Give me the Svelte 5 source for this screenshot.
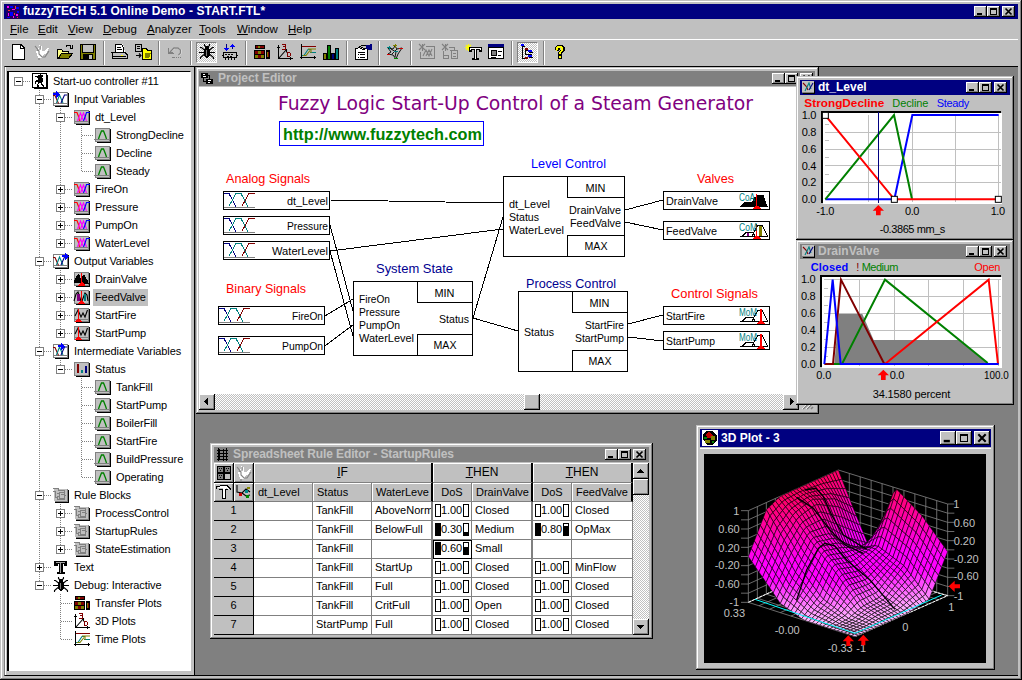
<script>
  const P = (c, d, w = 1) => `<path d="${d}" stroke="${c}" stroke-width="${w}" fill="none"/>`;
  const S = (c, d, w = 1.1) => `<path d="${d}" stroke="${c}" stroke-width="${w}" fill="none" shape-rendering="geometricPrecision"/>`;
  const F = (c, d) => `<path d="${d}" fill="${c}"/>`;
  const tile = (bg) => F('#000', 'M2 2h14v14h-14z') + F('#808080', 'M0 1h15v14h-15z') + F(bg, 'M1 2h13v12h-13z');
  const bug =
    S('#000', 'M5.500 0v1.500l1.500 1.500M10.500 0v1.500l-1.500 1.500M1 3.500h1.500l3 2.500M15 3.500h-1.500l-3 2.500M0 8.500h5M11 8.500h5M1.500 15v-1.500l3.500-3M14.500 15v-1.500l-3.500-3') +
    F('#000', 'M6 2h4v2h-4zM6 4h4v1h1v7h-1v1h-1v1h-2v-1h-1v-1h-1v-7h1z') + F('#808080', 'M7 6h1v6h-1z');
  const transfer =
    F('#000', 'M1 1h10v4h-10zM0 6h11v9h-11zM12 6h4v9h-4z') + F('#800000', 'M2 2h2v2h-2zM6 2h4v2h-4zM1 7h3v3h-3zM7 7h3v3h-3zM4 11h3v3h-3z') +
    F('#808000', 'M4 2h2v2h-2zM4 7h3v3h-3zM1 11h3v3h-3zM7 11h3v3h-3zM13 8h1v5h-1z') + F('#800000', 'M14 8h1v5h-1z');
  const plot3 =
    P('#000', 'M1.500 1v14M0 3.500h3M1 14.500h15M13.500 13v3') + S('#000', 'M2 14L9.500 5.500M6.500 5.500h3v3') +
    P('#800000', 'M5 .5h3.500v5H5M6 2.500h2M10.500 8v5M10 8.500h3M13.500 9v3M10 12.500h3');
  const time =
    P('#000', 'M1.500 0v15M0 13.500h16M14.500 12v3') + P('#800000', 'M2 2.500h14') + S('#008080', 'M2 11.500h2l4-6h3M10 8.500h6') +
    S('#808000', 'M8 5h8M3 11.500h3l4-5M11 5v4');
  const curves = S('#f00', 'M0 3.500h3l1.500 4l1 4.500') + S('#f0f', 'M3.500 12l1.500-4l1.500-4l1.500 4l1.500 4M6.500 12l1.500-4l1.500-4l1.500 4l1.500 4') + S('#00f', 'M9.500 12l1.500-4l1.500-4.500h3.500');
  const smallCurves = S('#800000', 'M0 4.500h2l3.500 8') + S('#008080', 'M3.500 12l3-8l3.500 8') + S('#000080', 'M8 12l3.500-8h2.500');
  const block = P('#808080', 'M0 1.500h5v2h6v4h-3M2 4.500h-2M2 4v6h2M6.500 5h5v6h-5zM4 6.500h3M4 9.500h3M11 8.500h2M4.500 10v2h7');
  const hand = F('#fff', 'M5 1h1v4h1v-3h1v5h3l2-3h2l-3 6h-2l-2 4h-4l-2-7h2z') + S('#808080', 'M1 2l4 5v3l3 3h3l4-6M3 6l2 1M6 2v4M5 14v2');
  const spark = S('#ff0', 'M3.500 0v7M0 3.500h7M1 1l5 5M6 1l-5 5');
  const I = {
    root: F('#000', 'M2 2h14v14h-14z') + F('#000', 'M0 0h15v15h-15z') + F('#fff', 'M1 1h13v13h-13z') +
      F('#000', 'M8 1h1v1h2v2h-1v1h1v4h-1v2h1v1h1v2h-1v-1h-1v-1h-1v-2h-2v1h-1v1h1v2h-2v-3h1v-2h-2v2h-1v-3h1v-1h2v-2h-1v-1h-2v-1h3v-1h1z'),
    input: tile('#fff') + P('#808080', 'M0 12.500h15') + smallCurves + F('#00f', 'M0 2h3v-2l4 3l-4 4v-3h-3z'),
    output: tile('#fff') + P('#808080', 'M0 12.500h15') + smallCurves + F('#00f', 'M9 2h3v-2l4 3l-4 4v-3h-3z'),
    inter: tile('#fff') + P('#808080', 'M0 12.500h15') + smallCurves + F('#00f', 'M5 2h3v-2l4 3l-4 4v-3h-3z'),
    var: tile('#c0c0c0') + P('#808080', 'M0 12.500h15') + curves,
    term: tile('#c0c0c0') + P('#808080', 'M-1 12.500h16') + S('#008000', 'M3.500 12l1-3l2-5h2l2 5l1 3', 1.3),
    drain: tile('#c0c0c0') + F('#000', 'M0 12l1-5h1l1-3l2-1l2 5l2-4h2l1 4h1l2 5z') + P('#f00', 'M7.500 2v12', 1) + F('#f00', 'M4 14h1l2-3h1l3 3v1h-7z'),
    feed: tile('#c0c0c0') + S('#000', 'M0 12l2-7l2-2l3 9M8 12l3-8l2 2l1 6') + F('#800080', 'M3 5h3v7h-3z') + F('#008080', 'M10 5h2v7h-2z') + P('#f00', 'M7.500 2v12') + F('#f00', 'M4 15l3-4h1l3 4z'),
    start: tile('#c0c0c0') + P('#808080', 'M0 12.500h14') + S('#000', 'M1 9l3-6l3 7l2-4l2 4l2.500-7') + P('#f00', 'M4.500 2v11') + F('#f00', 'M1 15l3-4h1l3 4z'),
    bars: tile('#c0c0c0') + F('#800000', 'M3 3h2v9h-2z') + F('#008080', 'M7 9h2v3h-2z') + F('#000080', 'M11 5h2v7h-2z'),
    rule: F('#000', 'M2 3h14v13h-14z') + F('#c0c0c0', 'M1 2h13v12h-13z') + P('#808080', 'M14.500 2v12.500h-13') + block,
    text: F('#000', 'M1 2h13v5h-3v-2h-1v8h2v2h-8v-2h2v-8h-1v2h-4z') + F('#a0a0a0', 'M3 3h9v1h-4v10h-1v-10h-4z'),
    bug, transfer, plot3, time,
    neu: F('#fff', 'M1 0h9l4 4v12h-13z') + P('#000', 'M1.500 .5h8.500l3.500 3.500v11.500h-12zM9.500 0v4.500h4'),
    hand,
    open: F('#ff8', 'M0 5h5l1 2h6v3h-7l-3 5h-2z') + F('#808000', 'M4 9h12l-4 6h-12z') + P('#000', 'M.5 15v-10h4l1 2h6v2M.5 14.500h11l4-5h-11l-3 5M9 2.500l1-1h3l1 2M15.500 1v3h-3'),
    save: F('#000', 'M0 0h16v16h-16z') + F('#808000', 'M1 1h14v14h-14z') + F('#c0c0c0', 'M3 1h10v7h-10zM9 11h3v4h-3z') + P('#000', 'M2.500 1v7h11v-7M3.500 15v-4.500h9v4.500') + F('#000', 'M4 11h5v4h-5z'),
    print: F('#fff', 'M4 0h7l2 8h-10z') + P('#000', 'M3.500 8v-7.500h6l2 3v5M5 3.500h4M5 5.500h5M0 8.500h3l10 0l2 2v4h-14zM1 12.500h13') + F('#ff0', 'M9 11h2v1h-2z'),
    pages: P('#000', 'M.5 .5h6v7h-6zM2 2.500h3M2 4.500h3M1 11.500h5') + S('#000', 'M4 9.500l2 2l-2 2') + F('#ff0', 'M8 5h4l1 2h3v8h-8z') + P('#000', 'M7.500 15v-10.500h4l1 2h3.500v8.500z') + F('#808000', 'M10 9h6l-2 5h-4z'),
    undo: S('#fff', 'M4 7l4-3h3l3 2v3l-2 2') + F('#808080', 'M1 4h1v4h4v1h1v1h-6z') + S('#808080', 'M3 8l4-4h4l2.500 2v3l-2 2', 1.3) + P('#808080', 'M5 13.500h3M9 13.500h1M11 13.500h1M13 13.500h1'),
    chip: P('#000080', 'M4.500 0v5M10.500 5v-5') + F('#00f', 'M2 4h5l-2.500 3zM8 3h5l-2.500-3z') + F('#000', 'M1 8h14v6h-14z') + F('#c0c0c0', 'M2 9h12v4h-12z') + P('#000', 'M3 10.500h2M6 10.500h2M9 10.500h2M5 12.500h2M8 12.500h2M0 11.500h2M14 11.500h2M3.500 14v2M6.500 14v2M9.500 14v2M12.500 14v2'),
    chart: F('#000', 'M0 9h4v7h-4zM4 1h4v15h-4zM8 9h4v7h-4zM12 4h4v12h-4z') + F('#808000', 'M1 10h2v5h-2z') + F('#008000', 'M5 2h2v13h-2z') + F('#000080', 'M9 10h2v5h-2z') + F('#008080', 'M13 5h2v10h-2z'),
    props: F('#fff', 'M1 4h11v12h-11z') + P('#000', 'M.5 15.500v-11h2l4-3h4l2 3v11zM3 8.500h7M3 10.500h1M5 10.500h5M3 13.500h1M5 13.500h5M5 5l3-2M7 6l3-2M9 6l2-2') + F('#000080', 'M11 1h4v-1h2v6h-2l-4-1z'),
    net: S('#000', 'M1 4l5 1l2-3l2 3l5-1l-4 6l-2 5l-3-4l-5-1l3-2zM4 5l5 3l-1 5M10 5l-5 5', 0.9) + P('#008080', 'M0 3.500h4M2.500 2v4M7 7.500h4') + P('#808000', 'M6 1.500h4M8.500 0v4') + P('#c00', 'M12 4.500h4M0 10.500h3') + P('#080', 'M7 14.500h4'),
    dis1: S('#808080', 'M0 0l6 6M6 0l-6 6M3.500 0v7') + P('#808080', 'M7 2.500h8.500v12h-14v-7') + S('#808080', 'M4 12l3-6l3 6l3-7M7 12l3-6l3 6'),
    dis2: S('#808080', 'M0 0l6 6M6 0l-6 6M3.500 0v7') + P('#808080', 'M7 3.500h5v3M1.500 7v7.500h5v-3h-5M8 6.500h7.500v8h-6v-8M11 9.500h3M11 12.500h3'),
    newtext: spark + F('#000', 'M4 3h13v5h-3v-2h-2v8h2v2h-7v-2h2v-8h-2v2h-3z') + F('#fff', 'M5 4h11v2h-1v-1h-4v10h-1v-10h-4v1h-1z'),
    form: F('#000', 'M0 1h16v14h-16z') + F('#000080', 'M0 0h16v3h-16z') + F('#fff', 'M1 4h14v10h-14z') + P('#000', 'M3.500 6.500h5v5h-5zM10 7.500h4M10 11.500h3M3 13.500h5') + F('#808080', 'M4 7h4v4h-4z'),
    tree: P('#000', 'M2.500 2v12h4M2 2.500h3M5.500 5v6M6 6.500h3') + F('#00f', 'M1 0h3v2h-3zM8 6h4v2h-4zM8 11h4v2h-4z') + F('#800000', 'M5 4h3v2h-3zM5 13h3v2h-3z') + P('#000', 'M9 8.500h4M6 10.500h6M9 13.500h4'),
    help: F('#000', 'M5 1h6v1h1v1h1v4h-1v1h-1v1h-1v2h-4v-3h1v-1h1v-1h1v-2h-1v2h-1v1h-3v-1h-1v-3h1v-1h1zM6 11h4v4h-4z') + F('#ff0', 'M5 2h5v1h1v4h-1v1h-1v1h-2v-1h1v-1h1v-3h-3v2h-1v1h-1v-4h1zM7 12h2v2h-2zM7 9h2v1h-2z'),
    app: F('#200060', 'M0 0h14v14h-14z') + F('#f0f', 'M1 1h2v2h-2zM6 4h3v1h-3zM2 8h1v3h-1zM10 9h2v2h-2zM7 11h1v2h-1z') + F('#00f', 'M4 1h3v2h-3zM10 2h3v2h-3zM4 7h3v4h-3zM11 6h2v2h-2zM1 12h3v1h-3z') + F('#f33', 'M9 1h1v3h-1zM2 5h2v1h-2zM8 8h1v2h-1zM11 12h1v1h-1z'),
    proj: F('#000', 'M0 1h7v5h-7zM5 7h7v5h-7z') + F('#fff', 'M2 2h2v1h-2zM2 4h3v1h-3zM7 8h3v1h-3zM7 10h2v1h-2z') + P('#000', 'M2.500 5v4.500h3M7 3.500h1.500v4'),
    fx: F('#000', 'M1 1h12v12h-12z') + F('#c0c0c0', 'M0 0h12v12h-12z') + P('#808080', 'M0 11.500h12') + S('#800000', 'M1 2l3 3l2 4') + S('#008080', 'M3 10l4-8l2 6') + S('#000080', 'M7 9l4-7'),
    sheet: P('#000', 'M1 2.500h11M1 5.500h11M1 8.500h11M1 11.500h11M2.500 0v13M7.500 1v12M10.500 0v13') + F('#000', 'M2 1h2v11h-2z'),
    plotwin: F('#fff', 'M0 0h16v16h-16z') + F('#000', 'M1 4l4-3h6l4 5v4l-4 5h-6l-4-6z') + F('#c00000', 'M4 4l3-2l4 3l-1 3h-5z') + F('#808000', 'M9 6h4v4h-4zM3 10h5v3h-5z') + F('#008000', 'M2 7h3v2h-3zM10 11h2v2h-2z'),
    checker: F('#000', 'M1 1h14v14h-14z') + F('#808080', 'M2 2h5v5h-5zM9 2h5v5h-5zM2 9h5v5h-5z') + F('#000', 'M3 3h1v1h-1zM5 3h1v1h-1zM4 5h1v1h-1zM10 3h1v1h-1zM12 3h1v1h-1zM11 5h1v1h-1zM3 10h1v1h-1zM5 10h1v1h-1zM4 12h1v1h-1z') + F('#c0c0c0', 'M9 9h5v5h-5z'),
    hammer: F('#fff', 'M1 2h10l4 3v1l-5-2v10h-3v-10h-5z') + P('#000', 'M0 4.500v-2h3l2-1h6l4 4M3 5h3.500v9h3v-9l2 0'),
    nodes: S('#000', 'M1 1v7l5 1l4-4l4 3M6 9l4 3l4-1') + F('#c00', 'M3 9h3v3h-3z') + F('#080', 'M10 11h3v3h-3z') + F('#088', 'M9 6h3v3h-3z') + F('#880', 'M11 3h3v2h-3z')
  };

  const raw = [
    [0, '-', 'root', 'Start-uo controller #11'], [1, '-', 'input', 'Input Variables'], [2, '-', 'var', 'dt_Level'],
    [3, '', 'term', 'StrongDecline'], [3, '', 'term', 'Decline'], [3, '', 'term', 'Steady'],
    [2, '+', 'var', 'FireOn'], [2, '+', 'var', 'Pressure'], [2, '+', 'var', 'PumpOn'], [2, '+', 'var', 'WaterLevel'],
    [1, '-', 'output', 'Output Variables'], [2, '+', 'drain', 'DrainValve'], [2, '+', 'feed', 'FeedValve'], [2, '+', 'start', 'StartFire'], [2, '+', 'start', 'StartPump'],
    [1, '-', 'inter', 'Intermediate Variables'], [2, '-', 'bars', 'Status'],
    [3, '', 'term', 'TankFill'], [3, '', 'term', 'StartPump'], [3, '', 'term', 'BoilerFill'], [3, '', 'term', 'StartFire'], [3, '', 'term', 'BuildPressure'], [3, '', 'term', 'Operating'],
    [1, '-', 'rule', 'Rule Blocks'], [2, '+', 'rule', 'ProcessControl'], [2, '+', 'rule', 'StartupRules'], [2, '+', 'rule', 'StateEstimation'],
    [1, '+', 'text', 'Text'], [1, '-', 'bug', 'Debug: Interactive'],
    [2, '', 'transfer', 'Transfer Plots'], [2, '', 'plot3', '3D Plots'], [2, '', 'time', 'Time Plots']
  ];
  const goesOn = (i, l) => {
    for (let j = i + 1; j < raw.length; j++) {
      if (raw[j][0] < l) return false;
      if (raw[j][0] === l) return true;
    }
    return false;
  };
  const tree = raw.map(([level, box, icon, label], i) => ({
    level, box, icon, label,
    lines: [1, 2, 3].filter((l) => l <= level && (l === level || goesOn(i, l))).map((l) => ({ x: 9.5 + 21 * l, end: goesOn(i, l) ? 18 : 9 }))
  }));

  const menu = ['File', 'Edit', 'View', 'Debug', 'Analyzer', 'Tools', 'Window', 'Help'];
  const tools = ['neu', 'hand', 'open', 'save', '|', 'print', 'pages', '|', 'undo', '|', 'bug', 'chip', '|', 'transfer', 'plot3', 'time', 'chart', '|', 'props', '|', 'net', '|', 'dis1', 'dis2', 'newtext', 'form', '|', 'tree', '|', 'help'];
  const pressed = ['bug', 'tree'];

  const inputs = [[223, 191, 'dt_Level', 41], [223, 216, 'Pressure', 41], [223, 241, 'WaterLevel', 56], [218, 306, 'FireOn', 31], [218, 336, 'PumpOn', 41]];
  const outputs = [[663, 191, 'DrainValve', 52, 'CoA'], [663, 221, 'FeedValve', 51, 'CoM'], [663, 306, 'StartFire', 39, 'MoM'], [663, 331, 'StartPump', 49, 'MoM']];
  const blocks = [
    { x: 503, y: 176, w: 121, h: 80, ix: 567, ins: [['dt_Level', 208, 41], ['Status', 221, 30], ['WaterLevel', 234, 55]], outs: [['DrainValve', 214, 52], ['FeedValve', 227, 51]] },
    { x: 353, y: 281, w: 119, h: 74, ix: 417, ins: [['FireOn', 303, 31], ['Pressure', 316, 41], ['PumpOn', 329, 41], ['WaterLevel', 342, 55]], outs: [['Status', 323, 30]] },
    { x: 518, y: 291, w: 109, h: 80, ix: 572, ins: [['Status', 336, 30]], outs: [['StartFire', 329, 39], ['StartPump', 342, 49]] }
  ];
  const wires = [[330, 200, 503, 203], [330, 225, 353, 311], [330, 251, 503, 229], [330, 251, 353, 336], [325, 316, 353, 299], [325, 346, 353, 325], [473, 318, 503, 217], [473, 318, 518, 331], [625, 210, 663, 200], [625, 222, 663, 230], [628, 324, 663, 315], [628, 337, 663, 341]];
  const heads = [
    ['Analog Signals', 226, 183, 84, '#f00'], ['Binary Signals', 226, 293, 80, '#f00'], ['System State', 376, 273, 77, '#000090'], ['Level Control', 531, 168, 75, '#00f'],
    ['Process Control', 526, 288, 90, '#000090'], ['Valves', 697, 183, 37, '#f00'], ['Control Signals', 671, 298, 87, '#f00']
  ];

  const rules = [
    ['TankFill', 'AboveNorm', 1, 'Closed', 1, 'Closed'], ['TankFill', 'BelowFull', 0.3, 'Medium', 0.8, 'OpMax'], ['TankFill', '', 0.6, 'Small', null, ''],
    ['TankFill', 'StartUp', 1, 'Closed', 1, 'MinFlow'], ['TankFill', 'Full', 1, 'Closed', 1, 'Closed'], ['TankFill', 'CritFull', 1, 'Open', 1, 'Closed'], ['StartPump', 'Full', 1, 'Closed', 1, 'Closed']
  ];

  const ka = [0, 0.2, 0.35, 0.55, 0.8, 1];
  const kb = [0, 0.15, 0.3, 0.52, 0.77, 1];
  const H = [
    [0.5, 0.3, 0.1, 0, 0, 0], [0.92, 0.68, 0.42, 0.15, 0.02, 0], [1, 0.85, 0.66, 0.42, 0.08, 0],
    [1, 0.92, 0.62, 0.36, 0.1, 0], [1, 0.8, 0.34, 0.46, 0.33, 0.05], [1, 0.6, 0.22, 1, 0.78, 0.48]
  ];
  const seg = (k, v) => {
    let i = 0;
    while (i < k.length - 2 && v > k[i + 1]) i++;
    return [i, (v - k[i]) / (k[i + 1] - k[i])];
  };
  const height = (a, b) => {
    const [i, s] = seg(ka, a);
    const [j, t] = seg(kb, b);
    return (H[i][j] * (1 - t) + H[i][j + 1] * t) * (1 - s) + (H[i + 1][j] * (1 - t) + H[i + 1][j + 1] * t) * s;
  };
  const project = (a, b, z) => [
    175 * (1 - a) * (1 - b) + 445 * a * (1 - b) + 495 * (1 - a) * b + 773 * a * b,
    547 * (1 - a) * (1 - b) + 425 * a * (1 - b) + 650 * (1 - a) * b + 527 * a * b - 275 * z
  ];
  const shade = (z) => {
    if (z > 0.45) return `rgb(255,0,${Math.round(255 - (z - 0.45) * 290)})`;
    const g = z > 0.3 ? 0 : Math.round((0.3 - z) * 640);
    return `rgb(255,${g},255)`;
  };
  const N = 30;
  const cells = [];
  for (let i = 0; i < N; i++)
    for (let j = 0; j < N; j++) {
      const q = [[i, j], [i + 1, j], [i + 1, j + 1], [i, j + 1]].map(([m, n]) => {
        const z = height(m / N, n / N);
        return { z, p: project(m / N, n / N, z) };
      });
      cells.push({ d: i - j, pts: q.map((v) => v.p.map((n) => n.toFixed(1)).join(',')).join(' '), c: shade(q.reduce((s, v) => s + v.z, 0) / 4) });
    }
  cells.sort((m, n) => n.d - m.d);
  const L = (a, b, z, a2, b2, z2) => `M${project(a, b, z)}L${project(a2, b2, z2)}`;
  let walls = '';
  for (let i = 0; i <= 10; i++) {
    const k = i / 10;
    walls += L(0, 0, k, 1, 0, k) + L(1, 0, k, 1, 1, k) + L(k, 0, 0, k, 0, 1) + L(1, k, 0, 1, k, 1) + L(k, 0, 0, k, 1, 0) + L(0, k, 0, 1, k, 0);
    walls += `M153 ${272 + 27.5 * i}h22M773 ${252 + 27.5 * i}h20`;
  }
  const plotText = [
    ['1', 130, 284], ['0.60', 85, 338], ['0.20', 85, 395], ['-0.20', 74, 446], ['-0.60', 74, 503], ['-1', 118, 558], ['0.33', 101, 590], ['-0.00', 254, 641], ['-0.33', 413, 696], ['-1', 499, 696],
    ['0', 637, 632], ['1', 775, 572], ['-1', 791, 540], ['-0.60', 791, 481], ['-0.20', 791, 430], ['0.20', 791, 374], ['0.60', 791, 320], ['1', 790, 263]
  ];
  const ticks = ['1.0', '0.8', '0.6', '0.4', '0.2', '0.0'];
</script>

{#snippet icon(name, size = 16)}
  <svg class="ico" width={size} height={size} viewBox="0 0 {size} {size}" shape-rendering="crispEdges">{@html I[name]}</svg>
{/snippet}

{#snippet txt(x, y, s, len, fill = '#000', size = 11)}
  <text {x} {y} {fill} font-size={size} textLength={len} lengthAdjust="spacingAndGlyphs">{s}</text>
{/snippet}

{#snippet buttons()}
  <span class="btns">
    <i class="wb"><svg viewBox="0 0 13 11"><path d="M3 8h5" stroke="#000" stroke-width="2" /></svg></i>
    <i class="wb"><svg viewBox="0 0 13 11" shape-rendering="crispEdges"><path d="M3 2h7v7h-7zM4 4v4h5v-4z" fill-rule="evenodd" /></svg></i>
    <i class="wb last"><svg viewBox="0 0 13 11"><path d="M3.500 2.500l6 6M9.500 2.500l-6 6" stroke="#000" stroke-width="1.700" /></svg></i>
  </span>
{/snippet}

{#snippet arrow(d)}
  <span class="raised sb"><svg width="13" height="13" viewBox="0 0 13 13" shape-rendering="crispEdges"><path {d} /></svg></span>
{/snippet}

{#snippet dos(v)}
  {#if v !== null}
    <span class="dos">
      <i class="bar" class:full={v < 1}></i><span>{v.toFixed(2)}</span><i class="bar"><b style="height:{v < 1 ? v * 100 : 0}%"></b></i>
    </span>
  {/if}
{/snippet}

<div class="app">
  <div class="title main">{@render icon('app', 14)}<span class="cap">fuzzyTECH 5.1 Online Demo - START.FTL*</span>{@render buttons()}</div>
  <nav>{#each menu as m}<span><u>{m[0]}</u>{m.slice(1)}</span>{/each}</nav>
  <div class="tools">
    {#each tools as t}
      {#if t === '|'}<span class="sep"></span>{:else}<span class="tool" class:pressed={pressed.includes(t)}>{@render icon(t, 17)}</span>{/if}
    {/each}
  </div>
  <div class="work">
    <div class="side">
      <div class="tree">
        {#each tree as r}
          <div class="row">
            <svg width={23 + 21 * r.level} height="18" shape-rendering="crispEdges">
              {#each r.lines as l}<path d="M{l.x} 0V{l.end}" class="dots" />{/each}
              <path d="M{9.5 + 21 * r.level} 9.500h12" class="dots" />
              {#if r.box}
                <rect x={5.5 + 21 * r.level} y="5.5" width="8" height="8" fill="#fff" stroke="#808080" />
                <path d="M{7 + 21 * r.level} 9.500h5{r.box === '+' ? 'm-2.500 -2.500v5' : ''}" stroke="#000" fill="none" />
              {/if}
            </svg>
            {@render icon(r.icon)}
            <span class="label" class:sel={r.label === 'FeedValve'}>{r.label}</span>
          </div>
        {/each}
      </div>
    </div>

    <div class="mdi">
      <section class="win project">
        <div class="title off">{@render icon('proj', 14)}<span class="cap">Project Editor</span>{@render buttons()}</div>
        <svg class="canvas" width="615" height="307" viewBox="199 87 615 307">
          <g font-family="DejaVu Sans Condensed, DejaVu Sans, sans-serif">{@render txt(278, 110, 'Fuzzy Logic Start-Up Control of a Steam Generator', 475, '#800080', 20)}</g>
          <rect x="279.5" y="121.5" width="204" height="24" fill="none" stroke="#00f" />
          <g font-weight="bold">{@render txt(283, 140, 'http://www.fuzzytech.com', 199, '#008000', 16)}</g>
          {#each heads as [s, x, y, w, c]}{@render txt(x, y, s, w, c, 13)}{/each}
          {#each wires as [x1, y1, x2, y2]}<line {x1} {y1} {x2} {y2} stroke="#000" shape-rendering="crispEdges" />{/each}
          {#each inputs as [x, y, s, w]}
            <g fill="none" shape-rendering="crispEdges">
              <rect x={x + 0.5} y={y + 0.5} width="106" height="18" fill="#fff" stroke="#000" />
              <path d="M{x + 1} {y + 16.500}h31" stroke="#808080" />
              <path d="M{x + 1} {y + 2.500}h5l7 13" stroke="#000080" />
              <path d="M{x + 6} {y + 15}l7 -12.500h5l7 13" stroke="#008080" />
              <path d="M{x + 19} {y + 15}l7 -12.500h6" stroke="#800000" />
            </g>
            {@render txt(x + 105 - w, y + 14, s, w)}
          {/each}
          {#each outputs as [x, y, s, w, k]}
            <rect x={x + 0.5} y={y + 0.5} width="106" height="18" fill="#fff" stroke="#000" shape-rendering="crispEdges" />
            {@render txt(x + 3, y + 14, s, w)}
            <g transform="translate({x} {y})" fill="none" stroke="#000" shape-rendering="crispEdges">
              {#if k === 'CoA'}<path d="M78 15.500l4-4h7l3-5l3-2h5l4 11z" fill="#000" />
              {:else}<path d="M79 15.500l4-4h7l2 4M89 15l6-11h4l6 12M77 15.500h27" />{/if}
              {#if k === 'CoM'}<path d="M97 5v10" stroke="#808000" stroke-width="3" /><path d="M85 12v3" stroke="#800080" stroke-width="2" />{/if}
              <path d="M{k === 'MoM' ? 97.5 : 93.5} 3v13" stroke="#f00" stroke-width={k === 'MoM' ? 2 : 1} />
              <path d="M{k === 'MoM' ? 95 : 91} 17l2-2h2l2 2z" fill="#f00" stroke="#f00" />
            </g>
            {@render txt(x + 76, y + 10, k, k === 'CoA' ? 16 : 18, '#008080', 10.500)}
          {/each}
          {#each blocks as b}
            <g fill="#fff" stroke="#000" shape-rendering="crispEdges">
              <rect x={b.x + 0.5} y={b.y + 0.5} width={b.w} height={b.h} />
              <rect x={b.ix + 0.5} y={b.y + 0.5} width={b.x + b.w - b.ix} height="21" />
              <rect x={b.ix + 0.5} y={b.y + b.h - 20.5} width={b.x + b.w - b.ix} height="21" />
            </g>
            {@render txt((b.ix + b.x + b.w) / 2 - 10, b.y + 16, 'MIN', 20, '#000', 11.500)}
            {@render txt((b.ix + b.x + b.w) / 2 - 11, b.y + b.h - 6, 'MAX', 23, '#000', 11.500)}
            {#each b.ins as [s, y, w]}{@render txt(b.x + 6, y, s, w)}{/each}
            {#each b.outs as [s, y, w]}{@render txt(b.x + b.w - w - 3, y, s, w)}{/each}
          {/each}
        </svg>
        <div class="hscroll">
          {@render arrow('M7 2v7l-4-3.500z')}<span class="fill1"></span><span class="raised sb thumb"></span><span class="fill2"></span>{@render arrow('M5 2v7l4-3.500z')}
          <svg class="grip" width="16" height="16"><path d="M4 15l10-10M8 15l6-6M12 15l2-2" stroke="#808080" stroke-width="1.600" /><path d="M3 15l10-10M7 15l6-6" stroke="#fff" stroke-width=".8" /></svg>
        </div>
      </section>

      <section class="win level">
        <div class="title">{@render icon('fx', 13)}<span class="cap">dt_Level</span>{@render buttons()}</div>
        <svg width="210" height="140" viewBox="15 81 630 420" font-size="33">
          <g font-weight="bold"><text x="28" y="116" fill="#f00" textLength="240" lengthAdjust="spacingAndGlyphs">StrongDecline</text></g>
          <text x="292" y="116" fill="#008000" textLength="108">Decline</text>
          <text x="425" y="116" fill="#00f" textLength="98">Steady</text>
          <g shape-rendering="crispEdges" fill="none">
            <rect x="78" y="129" width="540" height="276" fill="#000" /><rect x="84" y="135" width="537" height="273" fill="#fff" />
            <path d="M91 193h526M91 244h526M91 292h526M91 343h526M91 168h12M91 217h12M91 268h12M91 319h12M91 370h12M220 142v260M351 142v260M481 142v260M610 142v260" stroke="#c0c0c0" stroke-width="3" />
          </g>
          <g fill="none" stroke-width="6">
            <path d="M91 394h207L352 141H611" stroke="#00f" />
            <path d="M91 394L297 141L351 394" stroke="#008000" />
            <path d="M91 142L298 394H611" stroke="#f00" />
            <path d="M250.500 132v272" stroke="#000080" stroke-width="3" shape-rendering="crispEdges" />
          </g>
          {#each [[91, 142], [298, 394], [610, 394]] as [x, y]}<rect x={x - 9} y={y - 9} width="18" height="18" fill="#fff" stroke="#000" stroke-width="3" />{/each}
          {#each ticks as s, i}<text x="20" y={154 + i * 50.300} textLength="44">{s}</text>{/each}
          <text x="64" y="440" textLength="54">-1.0</text><text x="330" y="440" textLength="43">0.0</text><text x="587" y="440" textLength="43">1.0</text>
          <path d="M250 411l17 17h-10v14h-14v-14h-10z" fill="#f00" />
          <text x="254" y="495" textLength="197">-0.3865 mm_s</text>
        </svg>
      </section>

      <section class="win drain">
        <div class="title off">{@render icon('fx', 13)}<span class="cap">DrainValve</span>{@render buttons()}</div>
        <svg width="210" height="142" viewBox="15 573 630 426" font-size="33">
          <g font-weight="bold"><text x="47" y="608" fill="#00f" textLength="113">Closed</text></g>
          <text x="184" y="608" fill="#800000">!</text>
          <text x="200" y="608" fill="#008000" textLength="110">Medium</text>
          <text x="538" y="608" fill="#f00" textLength="78">Open</text>
          <g shape-rendering="crispEdges" fill="none">
            <rect x="75" y="621" width="543" height="276" fill="#000" /><rect x="81" y="627" width="540" height="273" fill="#fff" />
            <path d="M88 635h530M88 685h530M88 736h530M88 787h530M88 838h530M88 660h12M88 711h12M88 762h12M88 813h12M88 864h12M193 635v260M297 635v260M400 635v260M505 635v260M610 635v260" stroke="#c0c0c0" stroke-width="3" />
          </g>
          <path d="M118 888L131 738H202L236 816H490L580 888z" fill="#808080" />
          <g fill="none" stroke-width="6">
            <path d="M114 888h27L270 635L578 885" stroke="#008000" />
            <path d="M270 888L581 635L609 888" stroke="#f00" />
            <path d="M88 888H114L138 635L268 888" stroke="#800000" />
            <path d="M88 888L113 635L137 888H611" stroke="#00f" />
          </g>
          {#each ticks as s, i}<text x="18" y={646 + i * 50.500} textLength="44">{s}</text>{/each}
          <text x="64" y="934" textLength="45">0.0</text><text x="284" y="934" textLength="44">0.0</text><text x="567" y="934" textLength="74" lengthAdjust="spacingAndGlyphs">100.0</text>
          <path d="M265 905l17 17h-10v14h-14v-14h-10z" fill="#f00" />
          <text x="233" y="989" textLength="233">34.1580 percent</text>
        </svg>
      </section>

      <section class="win sheet">
        <div class="title off">{@render icon('sheet', 14)}<span class="cap">Spreadsheet Rule Editor - StartupRules</span>{@render buttons()}</div>
        <div class="body">
          <div class="grid">
            <div class="corner">
              {#each ['checker', 'hand', 'hammer', 'nodes'] as c}<span class="raised">{@render icon(c)}</span>{/each}
            </div>
            <div class="h g3 end"><span><u>I</u>F</span></div><div class="h g2 end"><span><u>T</u>HEN</span></div><div class="h g2 end"><span><u>T</u>HEN</span></div>
            <div class="h l">dt_Level</div><div class="h l">Status</div><div class="h l end">WaterLeve</div><div class="h">DoS</div><div class="h l end">DrainValve</div><div class="h">DoS</div><div class="h l end">FeedValve</div>
            {#each rules as r, i}
              <div class="n">{i + 1}</div><div class="c"></div><div class="c">{r[0]}</div><div class="c thick">{r[1]}</div>
              <div class="c d" class:focus={i === 2}>{@render dos(r[2])}</div><div class="c thick">{r[3]}</div>
              <div class="c d">{@render dos(r[4])}</div><div class="c">{r[5]}</div>
            {/each}
          </div>
          <div class="vscroll">{@render arrow('M2 8h7l-3.500-4z')}<span class="raised sb"></span><span class="vfill"></span>{@render arrow('M2 4h7l-3.500 4z')}</div>
        </div>
      </section>

      <section class="win plot">
        <div class="title big">{@render icon('plotwin', 16)}<span class="cap">3D Plot - 3</span>{@render buttons()}</div>
        <svg class="scene" width="282" height="209" viewBox="42 102 846 627" font-size="33" fill="#c0c0c0">
          <path d={walls} stroke="#808080" stroke-width="2.500" fill="none" />
          <path d="M175 547L260 508M720 512L773 527L495 650" stroke="#fff" stroke-width="3" stroke-dasharray="9 3" fill="none" />
          {#each cells as c}<polygon points={c.pts} fill={c.c} stroke="#000" stroke-width="1.700" />{/each}
          <g fill="none" stroke="#000" stroke-width="4">
            <path d="M320 540L350 450L385 385L405 370L435 378L470 420L540 480L615 568" />
            <path d="M320 232L370 265L420 330L465 375L520 400" />
            <path d="M345 210L378 205L400 230L425 285L460 345L530 388" />
          </g>
          <path d="M195 538L495 640L755 525" fill="none" stroke="#0ff" stroke-width="3" />
          {#each plotText as [s, x, y]}<text {x} {y}>{s}</text>{/each}
          <g fill="#f00"><path d="M475 646l17 18h-11v14h-12v-14h-11zM520 644l17 18h-11v14h-12v-14h-11zM776 499l18 -17v11h16v12h-16v11z" /></g>
        </svg>
      </section>
    </div>
  </div>
</div>

<style>
  :global(body) { margin: 0; background: #c0c0c0; }
  .app { box-sizing: border-box; width: 1022px; height: 680px; padding: 4px 4px 5px; background: #c0c0c0; display: flex; flex-direction: column; overflow: hidden; font: 11px/13px "Liberation Sans", sans-serif; color: #000; box-shadow: inset -1px -1px #000, inset 1px 1px #c0c0c0, inset -2px -2px #808080, inset 2px 2px #fff; }
  svg { display: block; font-family: "Liberation Sans", sans-serif; }
  .ico { flex: none; overflow: visible; }
  .title { height: 15px; flex: none; background: #000080; color: #fff; display: flex; align-items: center; padding: 0 3px 0 2px; font-weight: bold; font-size: 12px; }
  .title.off { background: #808080; color: #c0c0c0; }
  .cap { margin-left: 3px; flex: 1; white-space: pre; }
  .main .cap { letter-spacing: 0.1px; }
  .sheet .cap { letter-spacing: -0.1px; }
  .btns { display: flex; }
  .wb { width: 13px; height: 11px; background: #c0c0c0; box-shadow: inset -1px -1px #000, inset 1px 1px #fff, inset -2px -2px #808080; }
  .wb.last { margin-left: 2px; }
  .wb svg { width: 100%; height: 100%; }
  nav { height: 20px; flex: none; display: grid; grid-template-columns: 28px 30px 35px 44px 52px 38px 51px 40px; padding: 4px 0 0 6px; box-sizing: border-box; font-size: 11.500px; }
  .tools { height: 27px; flex: none; box-sizing: border-box; border-top: 1px solid #fff; display: flex; align-items: center; padding: 0 0 1px 3px; }
  .tool { width: 23px; height: 23px; box-sizing: border-box; padding-left: 2px; display: grid; place-items: center; flex: none; }
  .sep { width: 9px; flex: none; height: 24px; background: linear-gradient(90deg, transparent 4px, #808080 4px 5px, #fff 5px 6px, transparent 6px); }
  .pressed { width: 21px; margin: 0 1px; height: 21px; border: 1px solid; border-color: #808080 #fff #fff #808080; }
  .pressed, .hscroll, .vscroll { background-color: #c0c0c0; background-image: conic-gradient(#fff 25%, #c0c0c0 0 50%, #fff 0 75%, #c0c0c0 0); background-size: 2px 2px; }
  .work { height: 608px; display: flex; border-top: 1px solid #000; border-left: 1px solid #808080; border-bottom: 1px solid #000; flex: none; }
  .side { width: 190px; flex: none; box-sizing: border-box; border-left: 1px solid #fff; border-right: 1px solid #000; padding: 4px 3px 4px 1px; background: #c0c0c0; }
  .tree { height: 600px; box-sizing: border-box; background: #fff; border-top: 1px solid #000; border-left: 2px solid #000; border-right: 1px solid #fff; outline: 1px solid #c0c0c0; }
  .row { height: 18px; display: flex; align-items: center; white-space: nowrap; }
  .label { margin-left: 3px; padding: 2px; letter-spacing: -0.1px; }
  .sel { background: #c0c0c0; }
  .dots { stroke: #808080; fill: none; stroke-dasharray: 1 1; }
  .mdi { flex: 1; position: relative; overflow: hidden; background: #808080; }
  .win { position: absolute; box-sizing: border-box; padding: 4px; background: #c0c0c0; box-shadow: inset -1px -1px #000, inset 1px 1px #c0c0c0, inset -2px -2px #808080, inset 2px 2px #fff; overflow: hidden; }
  .project { left: 1px; top: 0; width: 623px; height: 347px; padding-left: 3px; }
  .project .title { padding-right: 2px; }
  .canvas { background: #fff; margin-top: 1px; }
  .hscroll { height: 16px; display: flex; }
  .sb { width: 15px; height: 15px; flex: none; }
  .raised { box-sizing: border-box; background: #c0c0c0; box-shadow: inset -1px -1px #000, inset 1px 1px #fff, inset -2px -2px #808080; display: grid; place-items: center; }
  .hscroll .raised, .vscroll .raised { height: 16px; width: 16px; }
  .fill1 { width: 309px; }
  .fill2 { width: 243px; }
  .grip { background: #c0c0c0; flex: 1; height: 16px; }
  .level { left: 601px; top: 9px; width: 218px; height: 164px; }
  .drain { left: 601px; top: 173px; width: 218px; height: 165px; }
  .sheet { left: 15px; top: 376px; width: 443px; height: 196px; }
  .plot { left: 501px; top: 358px; width: 299px; height: 245px; }
  .big { height: 18px; border-bottom: 1px solid #c0c0c0; box-shadow: 0 1px #fff; }
  .big .wb { width: 16px; height: 14px; }
  .big .btns { margin-right: -2px; }
  .scene { background: #000; margin: 6px 0 0 4px; }
  .body { display: flex; padding-top: 1px; }
  .grid { display: grid; width: 419px; grid-template-columns: 40px 59px 59px 61px 39px 61px 39px 61px; grid-template-rows: 20px 19px repeat(7, 19px); }
  .corner { grid-row: span 2; display: grid; grid-template-columns: 20px 20px; border-right: 1px solid #000; box-sizing: border-box; }
  .h { background: #c0c0c0; box-sizing: border-box; border-bottom: 1px solid #808080; border-right: 1px solid #808080; box-shadow: inset 1px 1px #fff; display: grid; place-items: center; overflow: hidden; white-space: nowrap; }
  .h.l { display: block; padding: 3px 0 0 4px; }
  .h.end { border-right: 2px solid #000; }
  .g3, .g2 { font-size: 12px; }
  .g3 { grid-column: span 3; }
  .g2 { grid-column: span 2; }
  .n { background: #c0c0c0; text-align: center; box-sizing: border-box; border-bottom: 1px solid #000; border-right: 1px solid #000; padding-top: 2px; }
  .c { background: #fff; box-sizing: border-box; border-right: 1px solid #808080; border-bottom: 1px solid #808080; padding: 2px 0 0 3px; overflow: hidden; white-space: nowrap; }
  .thick { border-right-width: 2px; }
  .c.d { padding: 2px 0 0 2px; }
  .focus { outline: 1px solid #000; outline-offset: -1px; }
  .dos { display: flex; align-items: center; }
  .dos span { letter-spacing: -0.1px; width: 22px; }
  .bar { width: 6px; height: 13px; box-sizing: border-box; border: 1px solid #000; display: flex; align-items: flex-end; background: #fff; }
  .bar b { width: 100%; background: #000; }
  .bar.full { background: #000; }
  .vscroll { width: 16px; height: 172px; display: flex; flex-direction: column; }
  .vfill { flex: 1; }
</style>
